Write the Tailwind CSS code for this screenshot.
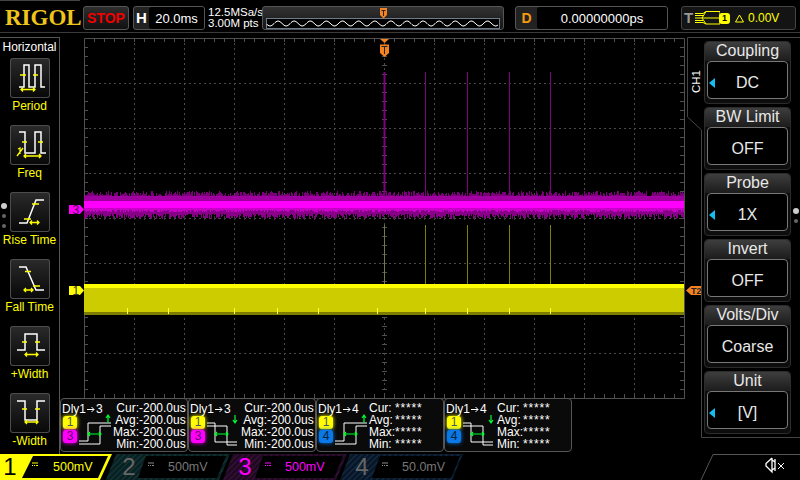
<!DOCTYPE html>
<html lang="en">
<head>
<meta charset="UTF-8">
<title>Rigol scope</title>
<script src="https://cdn.jsdelivr.net/npm/@tailwindcss/browser@4"></script>
</head>
<body class="bg-black">
<div class="w-[800px] h-[480px] bg-black overflow-hidden flex flex-col text-white font-['Liberation_Sans',Arial,sans-serif]">

  <!-- top bar -->
  <div class="relative h-[33px] shrink-0 border-b border-[#3a3a3a] flex items-center pt-[4px]">
    <div class="absolute top-0 left-0 w-[80px] h-px bg-[#444]"></div>
    <div class="w-[83px] pl-[5px] pb-[2px] text-[23px] font-bold leading-none font-['Liberation_Serif',serif] text-[#efc51c]">RIGOL</div>
    <div class="w-[46px] h-[24px] rounded-[3px] border border-[#555] bg-gradient-to-b from-[#2e2e2e] to-[#111] flex items-center justify-center text-[14px] font-bold text-[#f00000]">STOP</div>
    <div class="ml-[4px] w-[72px] h-[24px] rounded-[3px] border border-[#555] bg-[#222] flex items-center overflow-hidden">
      <span class="w-[15px] text-center text-[15px] font-bold">H</span>
      <span class="flex-1 h-full bg-black rounded-l-[3px] text-[13px] text-center leading-[23px]">20.0ms</span>
    </div>
    <div class="ml-[3px] w-[54px] text-[11.5px] leading-[11px]">12.5MSa/s<br>3.00M pts</div>
    <div class="w-[242px] h-[24px] rounded-[3px] border border-[#555] bg-gradient-to-b from-[#333] to-[#151515] flex flex-col relative">
      <svg class="absolute left-[116px] top-[1px]" width="10" height="11" viewBox="0 0 10 11"><path d="M1 0H8V7L4.5 10.5L1 7Z" fill="#f58220"/><path d="M2.5 2.5H6.5M4.5 2.5V8" stroke="#222" fill="none"/></svg>
      <svg class="mt-[11px] ml-[3px]" width="234" height="11" viewBox="0 0 234 11">
        <rect x="0.5" y="0.5" width="233" height="10" fill="#000" stroke="#6b7c8c"/>
        <path id="nav-wave" d="" fill="none" stroke="#fff"/>
      </svg>
    </div>
    <div class="ml-[11px] w-[153px] h-[24px] rounded-[3px] border border-[#555] bg-[#222] flex items-center overflow-hidden">
      <span class="w-[21px] text-center text-[14px] font-bold text-[#f59a10]">D</span>
      <span class="flex-1 h-full bg-black rounded-l-[3px] text-[13px] text-center leading-[23px]">0.00000000ps</span>
    </div>
    <div class="ml-[13px] w-[115px] h-[24px] rounded-[3px] border border-[#444] bg-[#141414] flex items-center text-[#ff0]">
      <span class="ml-[2px] w-[10px] text-[15px] font-bold text-[#999]">T</span>
      <svg class="ml-[1px]" width="25" height="14" viewBox="0 0 25 14"><path d="M0 2.5H8L11 0.5H25M0 7H25M0 11.5H8L11 13H25M0 4.5H8M0 9.5H8M11 0.5L7 7L11 13M25 0.5V13" stroke="#ff0" fill="none"/></svg>
      <span class="-ml-[1px] w-[11px] h-[11px] rounded-[3px] bg-[#ff0] text-black text-[9px] font-bold text-center leading-[11px]">1</span>
      <svg class="ml-[5px]" width="9" height="9" viewBox="0 0 9 9"><path d="M4.5 1L8.5 8H0.5Z" fill="none" stroke="#ff0"/></svg>
      <span class="ml-[4px] text-[12px]">0.00V</span>
    </div>
  </div>

  <!-- middle -->
  <div class="flex h-[417px] shrink-0 mt-[4px]">

    <!-- measure menu -->
    <div class="relative w-[60px] shrink-0 border-t border-r border-[#555] flex flex-col items-center text-[#ff0] text-[12px]">
      <div class="h-[20px] w-full text-white text-center leading-[19px]">Horizontal</div>
      <div class="flex flex-col">
        <div class="h-[67px] flex flex-col items-center">
          <svg class="rounded-[3px] shadow-[inset_0_0_0_1px_#4c4c4c] bg-gradient-to-b from-[#2b2b2b] to-[#080808]" width="40" height="40" viewBox="0 0 40 40">
            <path d="M9 29H14V7H19V29H25V7H31V29H35" fill="none" stroke="#fff" stroke-width="1.5"/>
            <path d="M10 17H16M23 17H28M11 31.5H25M13 29.5L11 31.5L13 33.5M23 29.5L25 31.5L23 33.5" fill="none" stroke="#ff0" stroke-width="1.3"/>
          </svg>
          <span class="mt-[1px] leading-[15px]">Period</span>
        </div>
        <div class="h-[67px] flex flex-col items-center">
          <svg class="rounded-[3px] shadow-[inset_0_0_0_1px_#4c4c4c] bg-gradient-to-b from-[#2b2b2b] to-[#080808]" width="40" height="40" viewBox="0 0 40 40">
            <path d="M9 7H15V28H25V7H31V28H36" fill="none" stroke="#fff" stroke-width="1.5"/>
            <path d="M12 17H17M28 17H33M14 31H31M16 29L14 31L16 33M29 29L31 31L29 33M8 24L10 23V29M7 31L13 23" fill="none" stroke="#ff0" stroke-width="1.3"/>
          </svg>
          <span class="mt-[1px] leading-[15px]">Freq</span>
        </div>
        <div class="h-[67px] flex flex-col items-center">
          <svg class="rounded-[3px] shadow-[inset_0_0_0_1px_#4c4c4c] bg-gradient-to-b from-[#2b2b2b] to-[#080808]" width="40" height="40" viewBox="0 0 40 40">
            <path d="M9 31H17L26 8H34" fill="none" stroke="#fff" stroke-width="1.5"/>
            <path d="M22 12H29M14 27H21M20 30.5H29M22 28.5L20 30.5L22 32.5M27 28.5L29 30.5L27 32.5" fill="none" stroke="#ff0" stroke-width="1.3"/>
          </svg>
          <span class="mt-[1px] leading-[15px] whitespace-nowrap">Rise Time</span>
        </div>
        <div class="h-[67px] flex flex-col items-center">
          <svg class="rounded-[3px] shadow-[inset_0_0_0_1px_#4c4c4c] bg-gradient-to-b from-[#2b2b2b] to-[#080808]" width="40" height="40" viewBox="0 0 40 40">
            <path d="M9 8H16L26 31H34" fill="none" stroke="#fff" stroke-width="1.5"/>
            <path d="M15 12.5H21M23 27H30M14 31H23M16 29L14 31L16 33M21 29L23 31L21 33" fill="none" stroke="#ff0" stroke-width="1.3"/>
          </svg>
          <span class="mt-[1px] leading-[15px] whitespace-nowrap">Fall Time</span>
        </div>
        <div class="h-[67px] flex flex-col items-center">
          <svg class="rounded-[3px] shadow-[inset_0_0_0_1px_#4c4c4c] bg-gradient-to-b from-[#2b2b2b] to-[#080808]" width="40" height="40" viewBox="0 0 40 40">
            <path d="M7 24H15V8H27V24H35" fill="none" stroke="#fff" stroke-width="1.5"/>
            <path d="M12 16H17M25 16H30M15 28.5H28M17 26.5L15 28.5L17 30.5M26 26.5L28 28.5L26 30.5" fill="none" stroke="#ff0" stroke-width="1.3"/>
          </svg>
          <span class="mt-[1px] leading-[15px]">+Width</span>
        </div>
        <div class="flex flex-col items-center">
          <svg class="rounded-[3px] shadow-[inset_0_0_0_1px_#4c4c4c] bg-gradient-to-b from-[#2b2b2b] to-[#080808]" width="40" height="40" viewBox="0 0 40 40">
            <path d="M7 8H15V27H27V8H35" fill="none" stroke="#fff" stroke-width="1.5"/>
            <path d="M12 16H17M25 16H30M15 29H28M17 27L15 29L17 31M26 27L28 29L26 31" fill="none" stroke="#ff0" stroke-width="1.3"/>
          </svg>
          <span class="mt-[1px] leading-[15px]">-Width</span>
        </div>
      </div>
      <div class="absolute left-[1px] top-[165px] w-[6px] h-[6px] rounded-full bg-[#ccc]"></div>
      <div class="absolute left-[2px] top-[176px] w-[4px] h-[4px] rounded-full bg-[#666]"></div>
      <div class="absolute left-[2px] top-[186px] w-[4px] h-[4px] rounded-full bg-[#666]"></div>
    </div>

    <!-- plot and measurement readouts -->
    <div class="w-[627px] shrink-0 flex flex-col">
      <svg class="block overflow-visible mt-[1px]" width="627" height="360" viewBox="60 38 627 360">
        <g id="grid"></g>
        <g id="traces"></g>
        <path d="M380 39H389L384.5 43Z M380 44.5H389V53L384.5 57L380 53Z" fill="#f58220"/>
        <path d="M381.5 46.5H387.5M384.5 46.5V54" stroke="#222" fill="none"/>
        <path d="M69 205H80L84 209.5L80 214H69Z" fill="#f0f"/>
        <text x="72.5" y="213.5" font-size="12" fill="#500050" font-family="Liberation Sans">3</text>
        <path d="M69 286H80L84 290.5L80 295H69Z" fill="#ff0"/>
        <text x="72.5" y="295" font-size="12" fill="#333" font-family="Liberation Sans">1</text>
        <path d="M701 286H691L686 290.5L691 295H701Z" fill="#f58220"/>
        <text x="691" y="294" font-size="9" font-weight="bold" fill="#222" font-family="Liberation Sans">T2</text>
      </svg>

      <div class="flex h-[54px] text-[12px] leading-[12px]">
        <div class="w-[128px] shrink-0 relative rounded-[4px] border border-[#555] bg-[#0a0a0a]">
          <span class="absolute left-[1px] top-[4px] flex items-center whitespace-nowrap">Dly1<svg class="mx-[1px]" width="8" height="7" viewBox="0 0 8 7"><path d="M0 3.5H7M4.500 1L7 3.500L4.500 6" fill="none" stroke="#fff"/></svg>3</span>
          <span class="absolute left-[2px] top-[17px] w-[14px] h-[13px] rounded-[3px] bg-[#ff0] text-[#555] shadow-[0_0_4px_#ff0] text-center">1</span>
          <span class="absolute left-[2px] top-[31px] w-[14px] h-[13px] rounded-[3px] bg-[#f0f] text-[#606] shadow-[0_0_4px_#f0f] text-center">3</span>
          <svg class="absolute left-0 top-0" width="56" height="52" viewBox="0 0 56 52">
            <path d="M18 42H27V24H50M18 45H39V27H50" fill="none" stroke="#fff"/>
            <path d="M27 35H40M29 33L27 35L29 37M38 33L40 35L38 37M47 24V17M45 19L47 16L49 19" fill="none" stroke="#0f3" stroke-width="1.2"/>
          </svg>
          <div class="absolute left-[52px] top-[3px] grid grid-cols-[26px_auto] whitespace-nowrap">
            <span class="text-right">Cur:</span><span>-200.0us</span>
            <span class="text-right">Avg:</span><span>-200.0us</span>
            <span class="text-right">Max:</span><span>-200.0us</span>
            <span class="text-right">Min:</span><span>-200.0us</span>
          </div>
        </div>
        <div class="w-[128px] shrink-0 relative rounded-[4px] border border-[#555] bg-[#0a0a0a]">
          <span class="absolute left-[1px] top-[4px] flex items-center whitespace-nowrap">Dly1<svg class="mx-[1px]" width="8" height="7" viewBox="0 0 8 7"><path d="M0 3.5H7M4.500 1L7 3.500L4.500 6" fill="none" stroke="#fff"/></svg>3</span>
          <span class="absolute left-[2px] top-[17px] w-[14px] h-[13px] rounded-[3px] bg-[#ff0] text-[#555] shadow-[0_0_4px_#ff0] text-center">1</span>
          <span class="absolute left-[2px] top-[31px] w-[14px] h-[13px] rounded-[3px] bg-[#f0f] text-[#606] shadow-[0_0_4px_#f0f] text-center">3</span>
          <svg class="absolute left-0 top-0" width="56" height="52" viewBox="0 0 56 52">
            <path d="M18 24H26V43H48M18 27H38V46H48" fill="none" stroke="#fff"/>
            <path d="M26 35H39M28 33L26 35L28 37M37 33L39 35L37 37M46 16V23M44 21L46 24L48 21" fill="none" stroke="#0f3" stroke-width="1.2"/>
          </svg>
          <div class="absolute left-[52px] top-[3px] grid grid-cols-[26px_auto] whitespace-nowrap">
            <span class="text-right">Cur:</span><span>-200.0us</span>
            <span class="text-right">Avg:</span><span>-200.0us</span>
            <span class="text-right">Max:</span><span>-200.0us</span>
            <span class="text-right">Min:</span><span>-200.0us</span>
          </div>
        </div>
        <div class="w-[128px] shrink-0 relative rounded-[4px] border border-[#555] bg-[#0a0a0a]">
          <span class="absolute left-[1px] top-[4px] flex items-center whitespace-nowrap">Dly1<svg class="mx-[1px]" width="8" height="7" viewBox="0 0 8 7"><path d="M0 3.5H7M4.500 1L7 3.500L4.500 6" fill="none" stroke="#fff"/></svg>4</span>
          <span class="absolute left-[2px] top-[17px] w-[14px] h-[13px] rounded-[3px] bg-[#ff0] text-[#555] shadow-[0_0_4px_#ff0] text-center">1</span>
          <span class="absolute left-[2px] top-[31px] w-[14px] h-[13px] rounded-[3px] bg-[#0a78e6] text-[#023] shadow-[0_0_4px_#0a78e6] text-center">4</span>
          <svg class="absolute left-0 top-0" width="56" height="52" viewBox="0 0 56 52">
            <path d="M18 42H27V24H50M18 45H39V27H50" fill="none" stroke="#fff"/>
            <path d="M27 35H40M29 33L27 35L29 37M38 33L40 35L38 37M47 24V17M45 19L47 16L49 19" fill="none" stroke="#0f3" stroke-width="1.2"/>
          </svg>
          <div class="absolute left-[52px] top-[3px] grid grid-cols-[26px_auto] whitespace-nowrap">
            <span>Cur:</span><span class="tracking-[0.8px]">*****</span>
            <span>Avg:</span><span class="tracking-[0.8px]">*****</span>
            <span>Max:</span><span class="tracking-[0.8px]">*****</span>
            <span>Min:</span><span class="tracking-[0.8px]">*****</span>
          </div>
        </div>
        <div class="w-[128px] shrink-0 relative rounded-[4px] border border-[#555] bg-[#0a0a0a]">
          <span class="absolute left-[1px] top-[4px] flex items-center whitespace-nowrap">Dly1<svg class="mx-[1px]" width="8" height="7" viewBox="0 0 8 7"><path d="M0 3.5H7M4.500 1L7 3.500L4.500 6" fill="none" stroke="#fff"/></svg>4</span>
          <span class="absolute left-[2px] top-[17px] w-[14px] h-[13px] rounded-[3px] bg-[#ff0] text-[#555] shadow-[0_0_4px_#ff0] text-center">1</span>
          <span class="absolute left-[2px] top-[31px] w-[14px] h-[13px] rounded-[3px] bg-[#0a78e6] text-[#023] shadow-[0_0_4px_#0a78e6] text-center">4</span>
          <svg class="absolute left-0 top-0" width="56" height="52" viewBox="0 0 56 52">
            <path d="M18 24H26V43H48M18 27H38V46H48" fill="none" stroke="#fff"/>
            <path d="M26 35H39M28 33L26 35L28 37M37 33L39 35L37 37M46 16V23M44 21L46 24L48 21" fill="none" stroke="#0f3" stroke-width="1.2"/>
          </svg>
          <div class="absolute left-[52px] top-[3px] grid grid-cols-[26px_auto] whitespace-nowrap">
            <span>Cur:</span><span class="tracking-[0.8px]">*****</span>
            <span>Avg:</span><span class="tracking-[0.8px]">*****</span>
            <span>Max:</span><span class="tracking-[0.8px]">*****</span>
            <span>Min:</span><span class="tracking-[0.8px]">*****</span>
          </div>
        </div>
      </div>
    </div>

    <!-- channel menu -->
    <div class="relative w-[113px] shrink-0">
      <svg class="absolute left-0 top-0" width="113" height="401" viewBox="0 0 113 401">
        <path d="M113 0.5H0.5V80L14.5 93V400.5H113" fill="none" stroke="#444"/>
      </svg>
      <span class="absolute left-[3px] top-[33px] text-[11.5px] leading-[13px] [writing-mode:vertical-rl] rotate-180">CH1</span>
      <div class="absolute left-[106px] top-[171px] w-[6px] h-[6px] rounded-full bg-[#ccc]"></div>
      <div class="absolute left-[107px] top-[182px] w-[4px] h-[4px] rounded-full bg-[#666]"></div>

      <div class="relative pl-[17px] pt-[4px] flex flex-col gap-[3px] text-[16px] text-[#e8e8e8]">
        <div class="w-[87px] h-[63px] rounded-[4px] border border-[#2c2c2c] bg-[#0d0d0d]">
          <div class="h-[19px] rounded-t-[4px] bg-gradient-to-b from-[#3e3e3e] to-[#1c1c1c] text-center leading-[18px]">Coupling</div>
          <div class="relative mx-[2px] h-[38px] rounded-[4px] border border-[#777] bg-black text-center leading-[42px]">DC<span class="absolute left-[1px] top-[16px] w-0 h-0 border-y-[5px] border-y-transparent border-r-[6px] border-r-[#12bff0]"></span></div>
        </div>
        <div class="w-[87px] h-[63px] rounded-[4px] border border-[#2c2c2c] bg-[#0d0d0d]">
          <div class="h-[19px] rounded-t-[4px] bg-gradient-to-b from-[#3e3e3e] to-[#1c1c1c] text-center leading-[18px]">BW Limit</div>
          <div class="mx-[2px] h-[38px] rounded-[4px] border border-[#777] bg-black text-center leading-[42px]">OFF</div>
        </div>
        <div class="w-[87px] h-[63px] rounded-[4px] border border-[#2c2c2c] bg-[#0d0d0d]">
          <div class="h-[19px] rounded-t-[4px] bg-gradient-to-b from-[#3e3e3e] to-[#1c1c1c] text-center leading-[18px]">Probe</div>
          <div class="relative mx-[2px] h-[38px] rounded-[4px] border border-[#777] bg-black text-center leading-[42px]">1X<span class="absolute left-[1px] top-[16px] w-0 h-0 border-y-[5px] border-y-transparent border-r-[6px] border-r-[#12bff0]"></span></div>
        </div>
        <div class="w-[87px] h-[63px] rounded-[4px] border border-[#2c2c2c] bg-[#0d0d0d]">
          <div class="h-[19px] rounded-t-[4px] bg-gradient-to-b from-[#3e3e3e] to-[#1c1c1c] text-center leading-[18px]">Invert</div>
          <div class="mx-[2px] h-[38px] rounded-[4px] border border-[#777] bg-black text-center leading-[42px]">OFF</div>
        </div>
        <div class="w-[87px] h-[63px] rounded-[4px] border border-[#2c2c2c] bg-[#0d0d0d]">
          <div class="h-[19px] rounded-t-[4px] bg-gradient-to-b from-[#3e3e3e] to-[#1c1c1c] text-center leading-[18px]">Volts/Div</div>
          <div class="mx-[2px] h-[38px] rounded-[4px] border border-[#777] bg-black text-center leading-[42px]">Coarse</div>
        </div>
        <div class="w-[87px] h-[63px] rounded-[4px] border border-[#2c2c2c] bg-[#0d0d0d]">
          <div class="h-[19px] rounded-t-[4px] bg-gradient-to-b from-[#3e3e3e] to-[#1c1c1c] text-center leading-[18px]">Unit</div>
          <div class="relative mx-[2px] h-[38px] rounded-[4px] border border-[#777] bg-black text-center leading-[42px]">[V]<span class="absolute left-[1px] top-[16px] w-0 h-0 border-y-[5px] border-y-transparent border-r-[6px] border-r-[#12bff0]"></span></div>
        </div>
      </div>
    </div>
  </div>

  <!-- channel bar -->
  <div class="relative h-[26px] shrink-0 flex text-[12.5px]">
    <svg class="absolute left-0 top-0" width="800" height="26" viewBox="0 0 800 26">
      <defs>
        <pattern id="hatch-teal" width="4" height="4" patternUnits="userSpaceOnUse" patternTransform="rotate(45)"><rect width="4" height="4" fill="#0a2022"/><rect width="1" height="4" fill="#123a3a"/></pattern>
        <pattern id="hatch-mag" width="4" height="4" patternUnits="userSpaceOnUse" patternTransform="rotate(45)"><rect width="4" height="4" fill="#1f0a22"/><rect width="1" height="4" fill="#3c1040"/></pattern>
        <pattern id="hatch-blue" width="4" height="4" patternUnits="userSpaceOnUse" patternTransform="rotate(45)"><rect width="4" height="4" fill="#0a1626"/><rect width="1" height="4" fill="#10304e"/></pattern>
      </defs>
      <path d="M0 0H112L100 26H0Z" fill="#ff0"/>
      <path d="M33 2H108L98 24H22Z" fill="#000"/>
      <path d="M116 0H230L219 26H106Z" fill="url(#hatch-teal)"/>
      <path d="M146 2H226L217 24H138Z" fill="#000"/>
      <path d="M233 0H347L336 26H223Z" fill="url(#hatch-mag)"/>
      <path d="M263 2H343L334 24H255Z" fill="#000"/>
      <path d="M350 0H463L452 26H340Z" fill="url(#hatch-blue)"/>
      <path d="M380 2H460L451 24H372Z" fill="#000"/>
      <path d="M713 0.5H800M713 0.5L701 26" fill="none" stroke="#555"/>
      <g fill="none" stroke="#ff0"><path d="M32 9H38"/><path d="M32 11.5H33M34 11.5H35M36 11.5H38"/></g>
      <g fill="none" stroke="#888"><path d="M148 9H154"/><path d="M148 11.5H149M150 11.5H151M152 11.5H154"/></g>
      <g fill="none" stroke="#f0f"><path d="M265 9H271"/><path d="M265 11.5H266M267 11.5H268M269 11.5H271"/></g>
      <g fill="none" stroke="#888"><path d="M382 9H388"/><path d="M382 11.5H383M384 11.5H385M386 11.5H388"/></g>
      <g fill="none" stroke="#fff" stroke-width="1.3"><path d="M772 4L766 9.5V12L772 18V4M775 5V17M772 6L775 8M772 16L775 14"/></g>
      <path d="M778 9L784 15M784 9L778 15" stroke="#fff" fill="none"/>
    </svg>
    <div class="relative w-[116px] flex items-center">
      <span class="w-[20px] text-center text-[24px] leading-[26px] text-black">1</span>
      <span class="ml-[33px] text-[#ff0]">500mV</span>
    </div>
    <div class="relative w-[117px] flex items-center">
      <span class="ml-[3px] w-[20px] text-center text-[24px] leading-[26px] text-[#666]">2</span>
      <span class="ml-[29px] text-[#777]">500mV</span>
    </div>
    <div class="relative w-[117px] flex items-center">
      <span class="ml-[2px] w-[20px] text-center text-[24px] leading-[26px] text-[#f0f]">3</span>
      <span class="ml-[30px] text-[#f0f]">500mV</span>
    </div>
    <div class="relative w-[117px] flex items-center">
      <span class="ml-[2px] w-[20px] text-center text-[24px] leading-[26px] text-[#666]">4</span>
      <span class="ml-[30px] text-[#777]">50.0mV</span>
    </div>
  </div>
</div>

<script>
  // seeded so each run draws the same noise
  let seed = 7;
  function rnd() {
    seed = (seed * 16807) % 2147483647;
    return seed / 2147483647;
  }

  // graticule
  let grid = '';
  const frame = '#505050', dot = '#4a4a4a';
  for (let x = 134; x < 684; x += 50) grid += `<path d="M${x}.5 38V398" stroke="${dot}" stroke-dasharray="2 3"/>`;
  for (let y = 83; y < 398; y += 45) grid += `<path d="M84 ${y}.5H684" stroke="${dot}" stroke-dasharray="2 3"/>`;
  for (let x = 94; x < 684; x += 10) {
    grid += `<path d="M${x}.5 38V42M${x}.5 398V394" stroke="${frame}"/>`;
    grid += `<path d="M${x}.5 216V220" stroke="#3a3a3a"/>`;
  }
  for (let i = 1; i < 40; i++) {
    const y = 38 + i * 9;
    grid += `<path d="M84 ${y}.5H88M684 ${y}.5H680M382 ${y}.5H387" stroke="${frame}"/>`;
  }
  grid += `<path d="M84.5 398V38.5H684.5V398M84 398.5H685" fill="none" stroke="${frame}"/>`;
  document.getElementById('grid').innerHTML = grid;

  // traces
  let t = '';
  const spikes = [425, 467, 509, 550];
  t += '<rect x="383.5" y="72" width="2" height="125" fill="#80007f"/>';
  spikes.forEach(x => { t += `<rect x="${x}" y="72" width="1" height="125" fill="#800080"/>`; });
  t += '<rect x="384" y="225" width="1" height="60" fill="#77774d"/>';
  spikes.forEach(x => { t += `<rect x="${x}" y="225" width="1" height="60" fill="#808000"/>`; });
  for (let x = 84; x < 684; x++) {
    const top = 196 - Math.floor(rnd() * 5.5);
    const bot = 214 + Math.floor(rnd() * 5.5);
    const lo = 210 + Math.floor(rnd() * 3);
    t += `<path d="M${x}.5 ${top}V196" stroke="#7a007a"/>`;
    t += `<path d="M${x}.5 196V201" stroke="#a000a0"/>`;
    t += `<path d="M${x}.5 208V${lo}" stroke="#c800c8"/>`;
    t += `<path d="M${x}.5 ${lo}V${bot}" stroke="#880088"/>`;
  }
  t += '<rect x="84" y="201" width="600" height="7" fill="#ff00ff"/>';
  t += '<rect x="84" y="288" width="600" height="24" fill="#cccc00"/>';
  t += '<rect x="84" y="284" width="600" height="4" fill="#ffff00"/>';
  t += '<rect x="84" y="312" width="600" height="3" fill="#7d7d00"/>';
  [377, 425, 467, 509, 550, 127, 168, 234, 277, 318].forEach(x => {
    t += `<rect x="${x}" y="308" width="1" height="6" fill="#ffff40"/>`;
  });
  document.getElementById('traces').innerHTML = t;

  // memory overview wave
  let d = 'M1 6';
  for (let x = 1; x <= 232; x++) d += `L${x} ${(5.5 + 2.5 * Math.sin(x * 0.39)).toFixed(1)}`;
  document.getElementById('nav-wave').setAttribute('d', d);
</script>
</body>
</html>
